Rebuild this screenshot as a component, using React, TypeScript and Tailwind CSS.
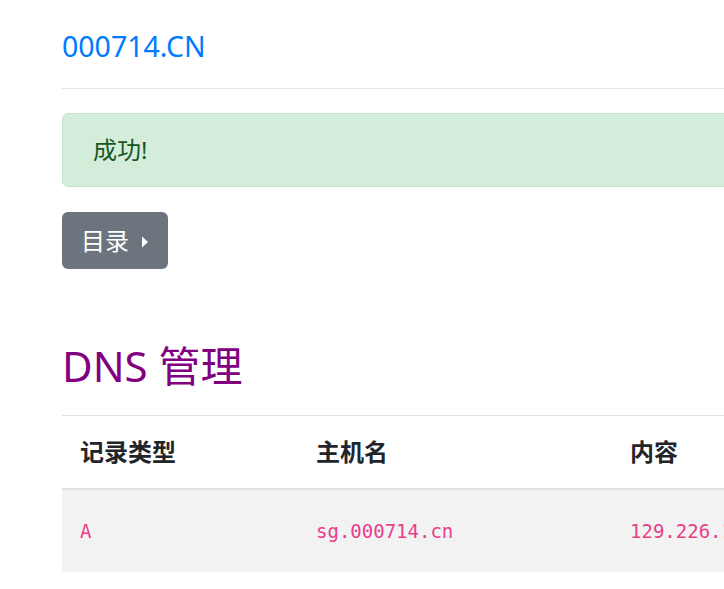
import { Fragment } from "react"

const records = [
  { type: "A", host: "sg.000714.cn", content: "129.226.112.36" },
]

const sans = "font-['Noto_Sans','Noto_Sans_CJK_SC',sans-serif]"

export default function App() {
  return (
    <div className={`w-[724px] h-[589px] overflow-hidden bg-white text-[24px] text-[#212529] ${sans}`}>
      <div className="w-[1100px] pl-[62px]">
        {/* Brand */}
        <div className="pt-[24px] pb-[19px] border-b border-[#e5e5e5]">
          <a href="#" className="text-[28.5px] leading-[45px] text-[#007bff]">
            000714.CN
          </a>
        </div>

        {/* Alert */}
        <div className="mt-[24px] rounded-[6px] border border-[#c3e6cb] bg-[#d4edda] px-[30px] py-[18px] leading-[36px] text-[#155724]">
          成功!
        </div>

        {/* Menu button */}
        <button className="mt-[25px] flex h-[57px] items-center gap-[12px] rounded-[6px] bg-[#6c757d] pl-[19px] pr-[19px] leading-[36px] text-white">
          <span>目录</span>
          <svg width="8" height="12" viewBox="0 0 8 12" className="mt-[2px]">
            <path d="M1 0.5 L7 6 L1 11.5 Z" fill="white" />
          </svg>
        </button>

        {/* DNS section */}
        <h3 className="mt-[72px] text-[42px] leading-[50px] text-[#800080]">DNS 管理</h3>

        <table className="mt-[24px] w-full border-collapse text-left">
          <thead>
            <tr className="border-t border-[#dee2e6] border-b-2">
              <th className="w-[236px] px-[18px] py-[18px] leading-[36px] font-bold">记录类型</th>
              <th className="w-[314px] px-[18px] py-[18px] leading-[36px] font-bold">主机名</th>
              <th className="px-[18px] py-[18px] leading-[36px] font-bold">内容</th>
            </tr>
          </thead>
          <tbody>
            {records.map((r) => (
              <Fragment key={r.host}>
                <tr className="bg-[#f2f2f2] h-[83px]">
                  <td className="px-[18px] font-['DejaVu_Sans_Mono',monospace] text-[19px] text-[#e83e8c]">{r.type}</td>
                  <td className="px-[18px] font-['DejaVu_Sans_Mono',monospace] text-[19px] text-[#e83e8c]">{r.host}</td>
                  <td className="px-[18px] font-['DejaVu_Sans_Mono',monospace] text-[19px] text-[#e83e8c]">{r.content}</td>
                </tr>
              </Fragment>
            ))}
          </tbody>
        </table>
      </div>
    </div>
  )
}
